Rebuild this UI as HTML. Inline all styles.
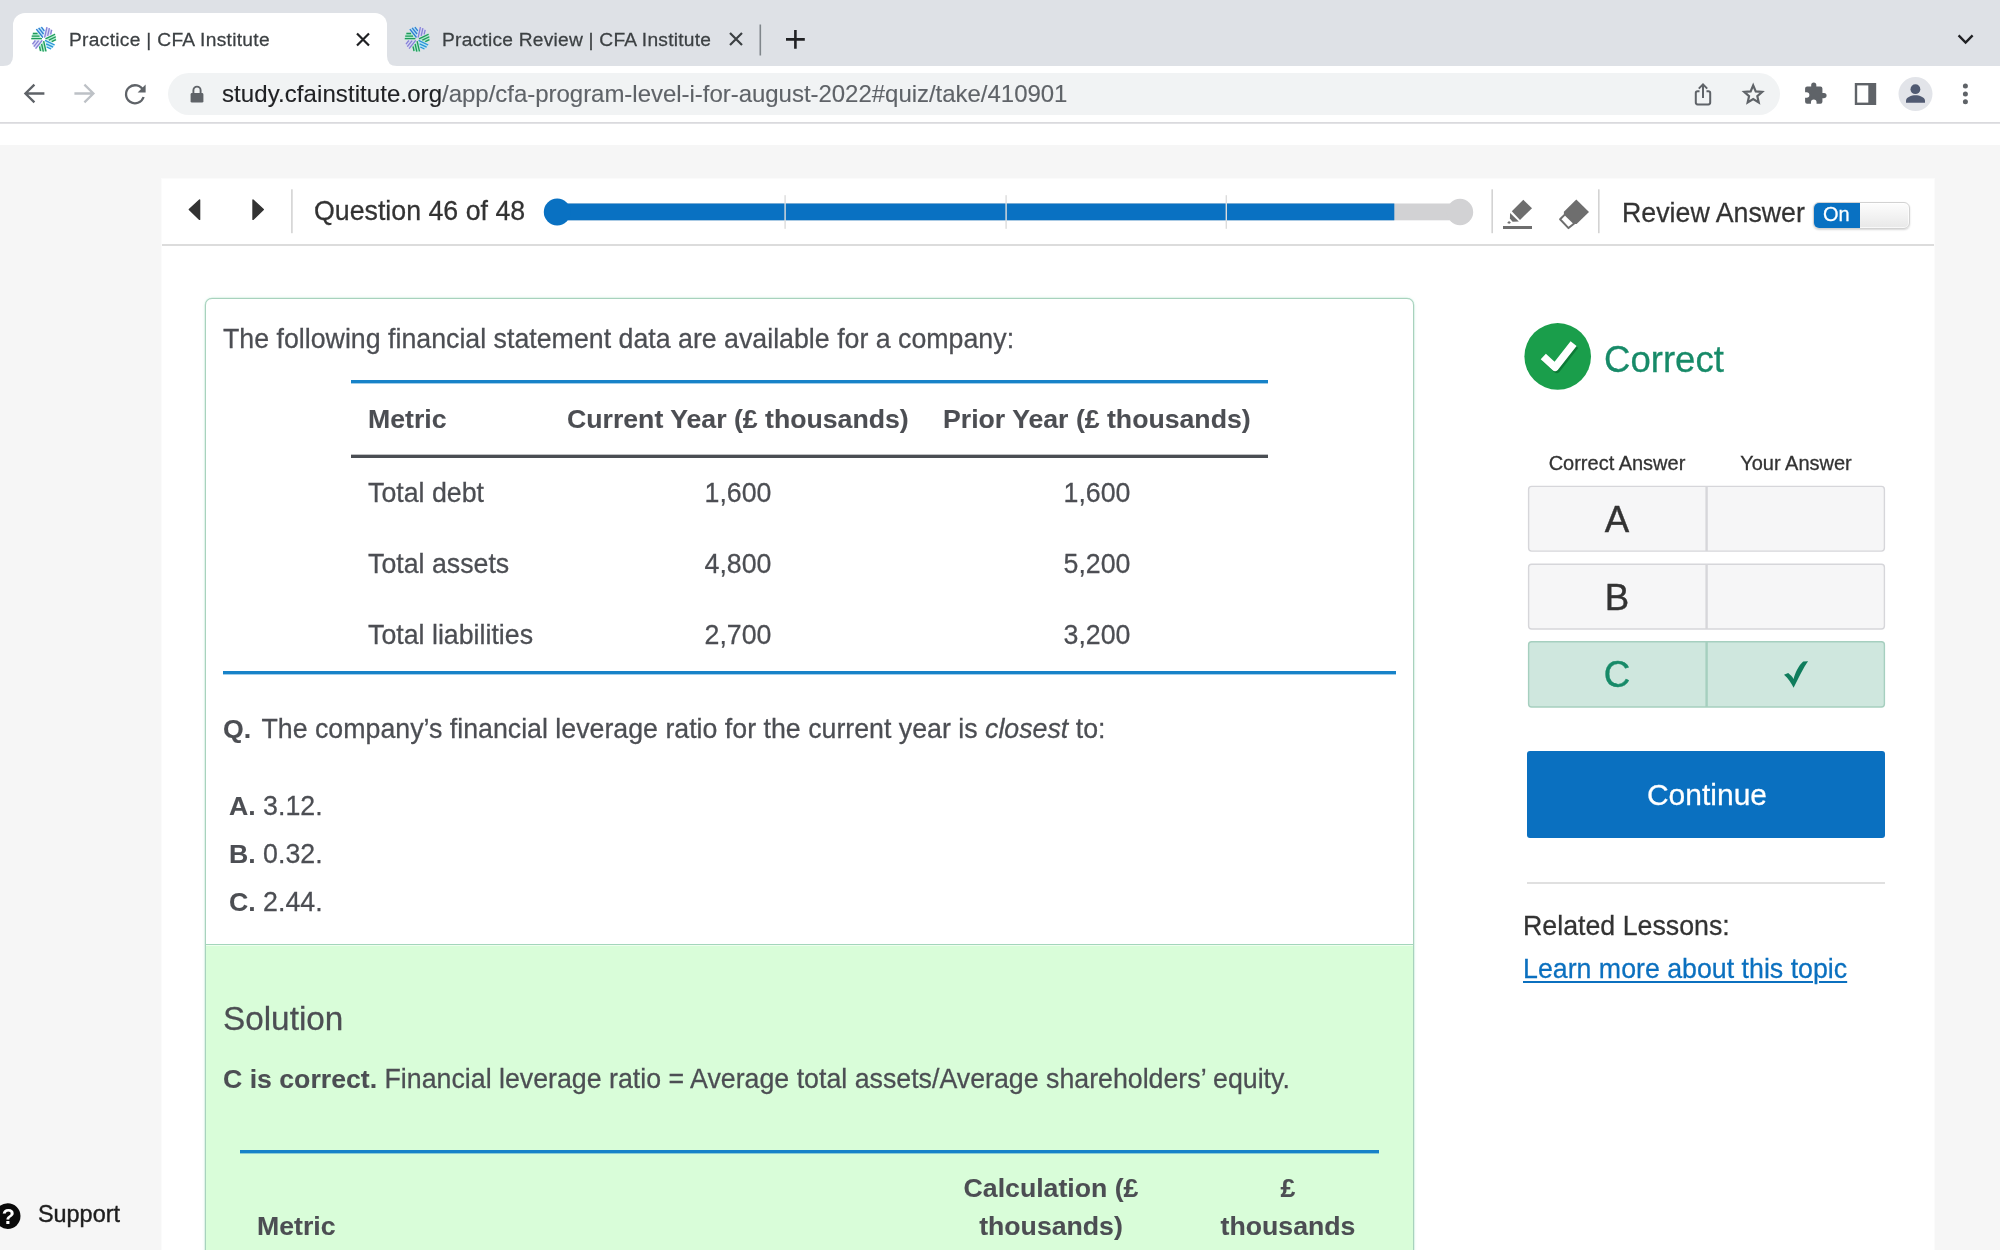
<!DOCTYPE html>
<html>
<head>
<meta charset="utf-8">
<title>Practice | CFA Institute</title>
<style>
*{box-sizing:border-box;margin:0;padding:0}
html,body{width:2000px;height:1250px;overflow:hidden;background:#f6f6f6;font-family:"Liberation Sans",sans-serif;color:#4c4e53}
.abs{position:absolute}
.t{position:absolute;white-space:nowrap;line-height:1;will-change:transform;-webkit-text-stroke:.26px}
/* browser chrome */
#tabbar{left:0;top:0;width:2000px;height:66px;background:#dee1e6}
#tab1{left:13px;top:13px;width:374px;height:53px;background:#fff;border-radius:12px 12px 0 0}
#toolbar{left:0;top:66px;width:2000px;height:56px;background:#fff}
#tbline{left:0;top:122px;width:2000px;height:2px;background:linear-gradient(#d6d6da,#e6e6e9)}
#strip{left:0;top:124px;width:2000px;height:21px;background:#fff}
#omni{left:168px;top:73px;width:1612px;height:42px;border-radius:21px;background:#f1f3f4}
.tabtxt{font-size:19.2px;letter-spacing:.3px;color:#3c4043;top:30px}
/* page */
#main{left:162px;top:179px;width:1772px;height:1071px;background:#fff;box-shadow:0 0 0 1px rgba(255,255,255,.5)}
#hdrline{left:162px;top:244px;width:1772px;height:2px;background:#dcdcdc}
.vdiv{width:2px;height:43px;top:190px;background:#d9d9d9}
.b{font-size:26.75px}
.b b,.bb{font-size:26.67px;font-weight:bold;-webkit-text-stroke:.1px}
#qbox{left:205px;top:298px;width:1209px;height:1000px;border:1px solid #a8d2bd;border-radius:7px;background:#fff;overflow:hidden;box-shadow:0 0 0 .3px rgba(150,205,180,.5),0 0 2.5px rgba(110,220,170,.35)}
#sol{left:0;top:645px;width:1207px;height:400px;background:#d9fdd9;border-top:1px solid #a3d6bb;box-shadow:inset 0 1px 0 rgba(255,255,255,.55)}
.blue{background:#1782c8;height:3px;box-shadow:0 1px 0 rgba(23,130,200,.4)}
.dark{background:#4a4e53;height:3px;box-shadow:0 -1px 0 rgba(74,78,83,.35)}
.ctr{transform:translateX(-50%)}
.cell{position:absolute;width:180px;height:67px;background:#f7f7f8;border:2px solid #d6d6d9}
.cell.g{background:#cfe8de;border-color:#a3d3c0}
</style>
</head>
<body>
<div id="root" style="position:absolute;left:0;top:0;width:2000px;height:1250px;overflow:hidden;background:#f6f6f6">
<!-- ===== Browser chrome ===== -->
<div class="abs" id="tabbar"></div>
<div class="abs" id="tab1"></div>
<div class="abs" id="toolbar"></div>
<div class="abs" id="tbline"></div>
<div class="abs" id="strip"></div>
<div class="abs" id="omni"></div>
<div class="t tabtxt" style="left:69px">Practice | CFA Institute</div>
<div class="t tabtxt" style="left:442px;letter-spacing:.23px">Practice Review | CFA Institute</div>
<div class="t" style="left:222px;top:82px;font-size:24px;color:#5f6368;letter-spacing:-.03px;-webkit-text-stroke:.12px"><span style="color:#202124;letter-spacing:.08px">study.cfainstitute.org</span>/app/cfa-program-level-i-for-august-2022#quiz/take/410901</div>
<svg class="abs" style="left:0;top:0" width="2000" height="123" viewBox="0 0 2000 123">
  <defs>
    <g id="fav">
      <g transform="rotate(0.00)"><path d="M-12.6 0.4 L-1.4 0.4 L-5.8 -6.5 L-11 -6.5 Z" fill-opacity=".75" fill="#9fe8c4"/><path d="M-12.4 -0.5 H-1.8 M-12 -3.1 H-4.2 M-10.8 -5.7 H-6.2" stroke="#1f9a5a" stroke-width="1.3" fill="none"/></g>
      <g transform="rotate(51.43)"><path d="M-12.6 0.4 L-1.4 0.4 L-5.8 -6.5 L-11 -6.5 Z" fill-opacity=".75" fill="#a8dcf5"/><path d="M-12.4 -0.5 H-1.8 M-12 -3.1 H-4.2 M-10.8 -5.7 H-6.2" stroke="#2f7fd1" stroke-width="1.3" fill="none"/></g>
      <g transform="rotate(102.86)"><path d="M-12.6 0.4 L-1.4 0.4 L-5.8 -6.5 L-11 -6.5 Z" fill-opacity=".75" fill="#d2d0f6"/><path d="M-12.4 -0.5 H-1.8 M-12 -3.1 H-4.2 M-10.8 -5.7 H-6.2" stroke="#8782d6" stroke-width="1.3" fill="none"/></g>
      <g transform="rotate(154.29)"><path d="M-12.6 0.4 L-1.4 0.4 L-5.8 -6.5 L-11 -6.5 Z" fill-opacity=".75" fill="#9fe8c4"/><path d="M-12.4 -0.5 H-1.8 M-12 -3.1 H-4.2 M-10.8 -5.7 H-6.2" stroke="#1f9a5a" stroke-width="1.3" fill="none"/></g>
      <g transform="rotate(205.71)"><path d="M-12.6 0.4 L-1.4 0.4 L-5.8 -6.5 L-11 -6.5 Z" fill-opacity=".75" fill="#a6e6f6"/><path d="M-12.4 -0.5 H-1.8 M-12 -3.1 H-4.2 M-10.8 -5.7 H-6.2" stroke="#2c94d6" stroke-width="1.3" fill="none"/></g>
      <g transform="rotate(257.14)"><path d="M-12.6 0.4 L-1.4 0.4 L-5.8 -6.5 L-11 -6.5 Z" fill-opacity=".75" fill="#9fe8c4"/><path d="M-12.4 -0.5 H-1.8 M-12 -3.1 H-4.2 M-10.8 -5.7 H-6.2" stroke="#1f9a5a" stroke-width="1.3" fill="none"/></g>
      <g transform="rotate(308.57)"><path d="M-12.6 0.4 L-1.4 0.4 L-5.8 -6.5 L-11 -6.5 Z" fill-opacity=".75" fill="#d2d0f6"/><path d="M-12.4 -0.5 H-1.8 M-12 -3.1 H-4.2 M-10.8 -5.7 H-6.2" stroke="#8782d6" stroke-width="1.3" fill="none"/></g>
    </g>
  </defs>
  <!-- tab ears -->
  <path d="M3 66 Q13 66 13 56 L13 66 Z" fill="#fff"/>
  <path d="M397 66 Q387 66 387 56 L387 66 Z" fill="#fff"/>
  <use href="#fav" x="43.7" y="39.2"/>
  <use href="#fav" x="417.2" y="39.2"/>
  <!-- tab close X -->
  <path d="M357 33.5 L369 45.5 M369 33.5 L357 45.5" stroke="#202124" stroke-width="2.2" fill="none"/>
  <path d="M730 33 L742 45 M742 33 L730 45" stroke="#3c4043" stroke-width="2.2" fill="none"/>
  <rect x="759.5" y="24.5" width="1.6" height="31" fill="#80868b"/>
  <path d="M786 39.4 H804.8 M795.4 30 V48.8" stroke="#202124" stroke-width="2.6" fill="none"/>
  <path d="M1958.6 35.4 L1965.6 42.6 L1972.6 35.4" stroke="#202124" stroke-width="2.4" fill="none"/>
  <!-- nav -->
  <path d="M44.4 93.5 H26 M34.4 84.6 L25.4 93.5 L34.4 102.4" stroke="#5f6368" stroke-width="2.3" fill="none"/>
  <path d="M74.4 93.5 H92.8 M84.4 84.6 L93.4 93.5 L84.4 102.4" stroke="#bdc1c6" stroke-width="2.3" fill="none"/>
  <path d="M143.2 90.5 A9 9 0 1 0 143.6 97" stroke="#5f6368" stroke-width="2.3" fill="none"/>
  <path d="M145.6 84.4 V92.4 H137.6 Z" fill="#5f6368"/>
  <!-- lock -->
  <rect x="190.6" y="93" width="12.8" height="9.6" rx="1.4" fill="#5f6368"/>
  <path d="M193.4 93.5 V90.2 A3.6 3.6 0 0 1 200.6 90.2 V93.5" stroke="#5f6368" stroke-width="1.9" fill="none"/>
  <!-- share -->
  <path d="M1699.5 91.2 H1697.6 Q1695.8 91.2 1695.8 93 V102.6 Q1695.8 104.4 1697.6 104.4 H1708.4 Q1710.2 104.4 1710.2 102.6 V93 Q1710.2 91.2 1708.4 91.2 H1706.5" stroke="#5f6368" stroke-width="2" fill="none"/>
  <path d="M1703 98 V85 M1698.8 88.6 L1703 84.4 L1707.2 88.6" stroke="#5f6368" stroke-width="2" fill="none"/>
  <!-- star -->
  <path d="M1753.2 84.6 L1756.1 91.4 L1763.4 92 L1757.9 96.8 L1759.5 104 L1753.2 100.2 L1746.9 104 L1748.5 96.8 L1743 92 L1750.3 91.4 Z" stroke="#5f6368" stroke-width="2.5" fill="none" stroke-linejoin="miter" transform="translate(1753.2 94.4) scale(.88) translate(-1753.2 -94.8)"/>
  <!-- puzzle -->
  <path transform="translate(1826.6 82.5) scale(1.07 1.05) translate(-1826.6 -82.5)" d="M1824.2 92.6 H1822.7 V88.3 Q1822.7 86.4 1820.8 86.4 H1817 V84.9 A2.4 2.4 0 0 0 1812.2 84.9 V86.4 H1808.4 Q1806.5 86.4 1806.5 88.3 V91.9 H1807.9 A2.6 2.6 0 0 1 1807.9 97.1 H1806.5 V100.8 Q1806.5 102.7 1808.4 102.7 H1812 V101.2 A2.6 2.6 0 0 1 1817.2 101.2 V102.7 H1820.8 Q1822.7 102.7 1822.7 100.8 V97.4 H1824.2 A2.4 2.4 0 0 0 1824.2 92.6 Z" fill="#5f6368"/>
  <!-- side panel -->
  <rect x="1856" y="84.2" width="19" height="19.6" fill="none" stroke="#5f6368" stroke-width="2.4"/>
  <rect x="1868.3" y="84.2" width="6.7" height="19.6" fill="#5f6368"/>
  <!-- avatar -->
  <circle cx="1915.5" cy="94" r="17" fill="#e2e4e9"/>
  <circle cx="1915.4" cy="89.2" r="4.9" fill="#505a72"/>
  <path d="M1906 102.8 V100.8 C1906 97 1911.5 95.2 1915.4 95.2 C1919.3 95.2 1925 97 1925 100.8 V102.8 Z" fill="#505a72"/>
  <!-- menu -->
  <circle cx="1965.4" cy="86.1" r="2.5" fill="#5f6368"/><circle cx="1965.4" cy="93.9" r="2.5" fill="#5f6368"/><circle cx="1965.4" cy="101.7" r="2.5" fill="#5f6368"/>
</svg>

<!-- ===== Page ===== -->
<div class="abs" id="main"></div>
<div class="abs" id="hdrline"></div>
<svg class="abs" style="left:162px;top:179px" width="1772" height="66" viewBox="162 179 1772 66">
  <g fill="#d3d3d3"><rect x="291.1" y="189.3" width="1.6" height="43.9"/><rect x="1491.4" y="189.3" width="1.6" height="43.9"/><rect x="1598" y="189.3" width="1.6" height="43.9"/></g>
  <!-- prev / next -->
  <path d="M189.3 209.6 L199.6 199.9 V219.4 Z" fill="#333" stroke="#333" stroke-width="1.4" stroke-linejoin="round"/>
  <path d="M263.3 209.6 L253 199.9 V219.4 Z" fill="#333" stroke="#333" stroke-width="1.4" stroke-linejoin="round"/>
  <!-- progress -->
  <rect x="557" y="203.5" width="903" height="16.8" fill="#d2d2d4"/>
  <circle cx="1460" cy="212" r="13.2" fill="#d2d2d4"/>
  <rect x="557" y="203.5" width="837.3" height="16.8" fill="#0971c2"/>
  <circle cx="557.2" cy="212" r="13.4" fill="#0971c2"/>
  <rect x="784.4" y="195.2" width="1.4" height="33.6" fill="#dcdcdc"/>
  <rect x="1005.4" y="195.2" width="1.4" height="33.6" fill="#dcdcdc"/>
  <rect x="1225.6" y="195.2" width="1.4" height="33.6" fill="#dcdcdc"/>
  <!-- highlighter -->
  <g fill="#6e6e6e">
    <path d="M1523.3 199.8 L1532 208.2 L1520 220 L1511.8 211.2 Z"/>
    <path d="M1510.1 213.1 L1518.9 221.6 L1512.6 221.8 L1509.9 218.6 Z"/>
    <path d="M1507.1 223 L1509 221.1 L1511 222.7 L1509.3 223.7 Z"/>
    <rect x="1503" y="226" width="29" height="3"/>
  </g>
  <!-- eraser -->
  <path d="M1576.3 199.6 L1589 212 L1576.6 224 L1574.4 223.9 L1563.9 213.6 L1563.9 211.8 Z" fill="#6e6e6e"/>
  <path d="M1565 214.4 L1574.2 223.4 L1568.5 228.1 L1560.1 219.3 Z" fill="#fff" stroke="#6e6e6e" stroke-width="2" stroke-linejoin="round"/>
</svg>
<!-- toggle -->
<div class="abs" style="left:1813px;top:202px;width:97px;height:27px;border-radius:6px;background:linear-gradient(#fdfdfd,#e8e8e8);border:1px solid #d2d2d2;box-shadow:0 1px 2px rgba(0,0,0,.16),inset 0 0 0 1px rgba(255,255,255,.7)"></div>
<div class="abs" style="left:1814px;top:203px;width:46px;height:25px;border-radius:5px 0 0 5px;background:#0971c2"></div>
<div class="t" style="left:1823.3px;top:204.4px;font-size:20px;color:#fff">On</div>
<div class="t b" style="left:314px;top:197.6px;color:#333">Question 46 of 48</div>
<div class="t b" style="left:1622px;top:200px;color:#333">Review Answer</div>

<!-- question box -->
<div class="abs" id="qbox">
  <div class="abs" id="sol"></div>
</div>
<!-- question content (page coords) -->
<div class="t b" style="left:223px;top:326px">The following financial statement data are available for a company:</div>
<div class="abs blue" style="left:351px;top:380px;width:917px"></div>
<div class="t b bb" style="left:368px;top:405.5px">Metric</div>
<div class="t b bb" style="left:567px;top:405.5px">Current Year (£ thousands)</div>
<div class="t b bb" style="left:943px;top:405.5px">Prior Year (£ thousands)</div>
<div class="abs dark" style="left:351px;top:455px;width:917px"></div>
<div class="t b" style="left:368px;top:480px">Total debt</div>
<div class="t b ctr" style="left:738px;top:480px">1,600</div>
<div class="t b ctr" style="left:1097px;top:480px">1,600</div>
<div class="t b" style="left:368px;top:551px">Total assets</div>
<div class="t b ctr" style="left:738px;top:551px">4,800</div>
<div class="t b ctr" style="left:1097px;top:551px">5,200</div>
<div class="t b" style="left:368px;top:622px">Total liabilities</div>
<div class="t b ctr" style="left:738px;top:622px">2,700</div>
<div class="t b ctr" style="left:1097px;top:622px">3,200</div>
<div class="abs blue" style="left:223px;top:671px;width:1173px"></div>
<div class="t b" style="left:223px;top:715.6px"><b style="margin-right:10.3px">Q.</b>The company’s financial leverage ratio for the current year is <i>closest</i> to:</div>
<div class="t b" style="left:229px;top:793px"><b>A.</b> 3.12.</div>
<div class="t b" style="left:229px;top:841px"><b>B.</b> 0.32.</div>
<div class="t b" style="left:229px;top:889px"><b>C.</b> 2.44.</div>
<!-- solution -->
<div class="t" style="left:223px;top:1002px;font-size:33.3px">Solution</div>
<div class="t b" style="left:223px;top:1066px"><b>C is correct.</b> Financial leverage ratio = Average total assets/Average shareholders’ equity.</div>
<div class="abs blue" style="left:240px;top:1150px;width:1139px"></div>
<div class="t b bb" style="left:257px;top:1213px">Metric</div>
<div class="t b bb ctr" style="left:1050.8px;top:1175px">Calculation (£</div>
<div class="t b bb ctr" style="left:1050.6px;top:1213px">thousands)</div>
<div class="t b bb ctr" style="left:1287.7px;top:1175px">£</div>
<div class="t b bb ctr" style="left:1287.8px;top:1213px">thousands</div>

<!-- ===== right panel ===== -->
<svg class="abs" style="left:1500px;top:300px;will-change:transform" width="420" height="430" viewBox="1500 300 420 430">
  <circle cx="1557.7" cy="356.4" r="33.3" fill="#1a9e4b"/>
  <path d="M1543.3 356.5 L1555 367.3 L1573.6 343.7" fill="none" stroke="#0d7a36" stroke-width="7.6" stroke-linejoin="round" transform="translate(1.6,2)"/>
  <path d="M1543.3 356.5 L1555 367.3 L1573.6 343.7" fill="none" stroke="#fff" stroke-width="7.6" stroke-linejoin="round"/>
  <g font-family="Liberation Sans, sans-serif" text-anchor="middle">
    <text x="1617" y="470.3" font-size="20" fill="#333" stroke="#333" stroke-width=".3">Correct Answer</text>
    <text x="1796" y="470.3" font-size="20" fill="#333" stroke="#333" stroke-width=".3">Your Answer</text>
    <g stroke-width="1.4">
      <rect x="1528.6" y="486.4" width="355.8" height="64.7" rx="3" fill="#f6f6f7" stroke="#d6d6da"/>
      <rect x="1528.6" y="564.3" width="355.8" height="64.7" rx="3" fill="#f6f6f7" stroke="#d6d6da"/>
      <rect x="1528.6" y="641.7" width="355.8" height="65.3" rx="3" fill="#cfe7de" stroke="#a6cfbf"/>
    </g>
    <rect x="1705.4" y="486.4" width="2.4" height="64.7" fill="#d6d6da"/>
    <rect x="1705.4" y="564.3" width="2.4" height="64.7" fill="#d6d6da"/>
    <rect x="1705.4" y="641.7" width="2.4" height="65.3" fill="#a6cfbf"/>
    <text x="1617.1" y="532" font-size="36.67" fill="#333" stroke="#333" stroke-width=".4">A</text>
    <text x="1617.1" y="609.6" font-size="36.67" fill="#333" stroke="#333" stroke-width=".4">B</text>
    <text x="1617.1" y="687.3" font-size="36.67" fill="#178a68" stroke="#178a68" stroke-width=".4">C</text>
  </g>
  <path d="M1784 674.7 L1788.2 673 C1790.5 674.8 1792.3 676.8 1793.6 678.9 C1795.2 672.5 1798.5 665.5 1803.2 661.4 L1808.1 661.2 C1803.5 667.5 1798.8 677.5 1793.6 687.8 C1791.3 682.8 1788 678 1784 674.7 Z" fill="#0f7d5c"/>
</svg>
<div class="t" style="left:1604px;top:342px;font-size:36.6px;color:#178a68">Correct</div>
<div class="abs" style="left:1527px;top:751px;width:358px;height:87px;background:#0a70c0;border-radius:3px"></div>
<div class="t ctr" style="left:1707px;top:780px;font-size:30px;color:#fff">Continue</div>
<div class="abs" style="left:1527px;top:881.5px;width:358px;height:2px;background:#e0e0e0"></div>
<div class="t b" style="left:1523px;top:913px;color:#333">Related Lessons:</div>
<div class="t b" style="left:1523px;top:956px;color:#0b70bf;text-decoration:underline;text-decoration-thickness:2px;text-underline-offset:3px">Learn more about this topic</div>

<!-- support -->
<svg class="abs" style="left:0;top:1200px;will-change:transform" width="24" height="32" viewBox="0 1200 24 32">
  <circle cx="7.7" cy="1216.1" r="12.8" fill="#0a0a0a"/>
  <text x="8.4" y="1224.3" font-family="Liberation Sans" font-weight="bold" font-size="21.5" fill="#fff" text-anchor="middle">?</text>
</svg>
<div class="t" style="left:38px;top:1202.5px;font-size:23.4px;color:#1e1e1e;-webkit-text-stroke:.4px">Support</div>
</div>
</body>
</html>
